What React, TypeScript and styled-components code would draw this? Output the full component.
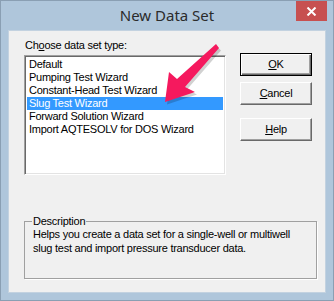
import * as React from 'react';
import styled, { createGlobalStyle } from 'styled-components';

const GlobalStyle = createGlobalStyle`
  html, body { margin: 0; padding: 0; background: #ffffff; }
  body { font-family: "Liberation Sans", Arial, sans-serif; }
`;

const items = [
    'Default',
    'Pumping Test Wizard',
    'Constant-Head Test Wizard',
    'Slug Test Wizard',
    'Forward Solution Wizard',
    'Import AQTESOLV for DOS Wizard',
];

export default function App() {
    const [selected, setSelected] = React.useState(3);

    return <Window>
        <GlobalStyle />
        <TitleBar>
            <span />
            <Title>New Data Set</Title>
            <CloseButton>
                <svg width="11" height="9" viewBox="0 0 11 9">
                    <path d="M1.5 0.5 L9.5 8.5 M9.5 0.5 L1.5 8.5" stroke="#fff" strokeWidth="2" />
                </svg>
            </CloseButton>
        </TitleBar>
        <Client>
            <TopRow>
                <ListColumn>
                    <Label>Ch<u>o</u>ose data set type:</Label>
                    <ListBox>
                        {items.map((item, i) =>
                            <ListItem key={item} selected={i === selected} onClick={() => setSelected(i)}>{item}</ListItem>
                        )}
                    </ListBox>
                </ListColumn>
                <ButtonColumn>
                    <Button isDefault><u>O</u>K</Button>
                    <Button><u>C</u>ancel</Button>
                    <Button spaced><u>H</u>elp</Button>
                </ButtonColumn>
            </TopRow>
            <GroupBox>
                <Legend>Description</Legend>
                <DescText>Helps you create a data set for a single-well or multiwell slug test and import pressure transducer data.</DescText>
            </GroupBox>
        </Client>
        {/* callout arrow lying over the dialog */}
        <Arrow width="334" height="301" viewBox="0 0 334 301">
            <polygon points="166,103 170,73 178,80 216,45 220,49 186,88 196,93" fill="#000" opacity="0.18" transform="translate(1,1.5)" />
            <polygon points="165,102 169,72 177,79 216,44 219,48 185,87 195,92" fill="#f5195e" />
        </Arrow>
    </Window>;
}

//Style Components
const Window = styled.div`
  position: relative;
  box-sizing: border-box;
  width: 334px;
  height: 301px;
  background: #afc6db;
  border: 1px solid #8a9fb3;
  display: flex;
  flex-direction: column;
`;

const TitleBar = styled.div`
  height: 29px;
  display: grid;
  grid-template-columns: 1fr auto 1fr;
  align-items: start;
`;

const Title = styled.div`
  font-family: "Noto Sans", "Open Sans", sans-serif;
  font-size: 15px;
  color: #2b2b2b;
  line-height: 20px;
  padding-top: 4px;
`;

const CloseButton = styled.div`
  justify-self: end;
  margin-right: 6px;
  width: 31px;
  height: 20px;
  background: #c75050;
  display: flex;
  align-items: center;
  justify-content: center;
`;

const Client = styled.div`
  flex: 1;
  margin: 0 7px 7px 7px;
  background: #f0f0f0;
  border: 1px solid #c3d2e0;
  padding: 7px 13px 0 15px;
  display: flex;
  flex-direction: column;
  font-size: 11px;
  letter-spacing: -0.25px;
  color: #000;
`;

const TopRow = styled.div`
  display: flex;
  justify-content: space-between;
`;

const ListColumn = styled.div`
  display: flex;
  flex-direction: column;
`;

const Label = styled.div`
  height: 14px;
  line-height: 14px;
  margin-bottom: 3px;
  padding-left: 1px;
`;

const ListBox = styled.div`
  box-sizing: border-box;
  width: 202px;
  height: 120px;
  background: #fff;
  border-top: 1px solid #a0a0a0;
  border-left: 1px solid #a0a0a0;
  border-right: 1px solid #fff;
  border-bottom: 1px solid #fff;
  box-shadow: inset 1px 1px 0 #696969, inset -1px -1px 0 #e3e3e3;
  padding: 2px 2px;
`;

const ListItem = styled.div<{ selected?: boolean }>`
  height: 13px;
  line-height: 13px;
  padding-left: 2px;
  white-space: nowrap;
  background: ${p => p.selected ? '#3399ff' : 'transparent'};
  color: ${p => p.selected ? '#fff' : '#000'};
`;

const ButtonColumn = styled.div`
  display: flex;
  flex-direction: column;
  padding-top: 15px;
  gap: 6px;
`;

const Button = styled.div<{ isDefault?: boolean; spaced?: boolean }>`
  box-sizing: border-box;
  width: 72px;
  height: 23px;
  margin-top: ${p => p.spaced ? '7px' : '0'};
  background: #f0f0f0;
  display: flex;
  align-items: center;
  justify-content: center;
  line-height: 13px;
  border: 1px solid ${p => p.isDefault ? '#000' : 'transparent'};
  border-top-color: ${p => p.isDefault ? '#000' : '#fff'};
  border-left-color: ${p => p.isDefault ? '#000' : '#fff'};
  border-right-color: ${p => p.isDefault ? '#000' : '#696969'};
  border-bottom-color: ${p => p.isDefault ? '#000' : '#696969'};
  box-shadow: ${p => p.isDefault
        ? 'inset 1px 1px 0 #fff, inset -1px -1px 0 #696969, inset -2px -2px 0 #a0a0a0'
        : 'inset -1px -1px 0 #a0a0a0'};
`;

const GroupBox = styled.fieldset`
  box-sizing: border-box;
  margin: 40px 0 0 0;
  width: 293px;
  height: 64px;
  border: 1px solid #a0a0a0;
  box-shadow: 1px 1px 0 #fff;
  padding: 0 8px 0 8px;
`;

const Legend = styled.legend`
  padding: 0 1px;
  margin-left: -1px;
  line-height: 13px;
`;

const DescText = styled.div`
  line-height: 14px;
  margin-top: -1px;
`;

const Arrow = styled.svg`
  position: absolute;
  left: -1px;
  top: -1px;
  pointer-events: none;
`;
